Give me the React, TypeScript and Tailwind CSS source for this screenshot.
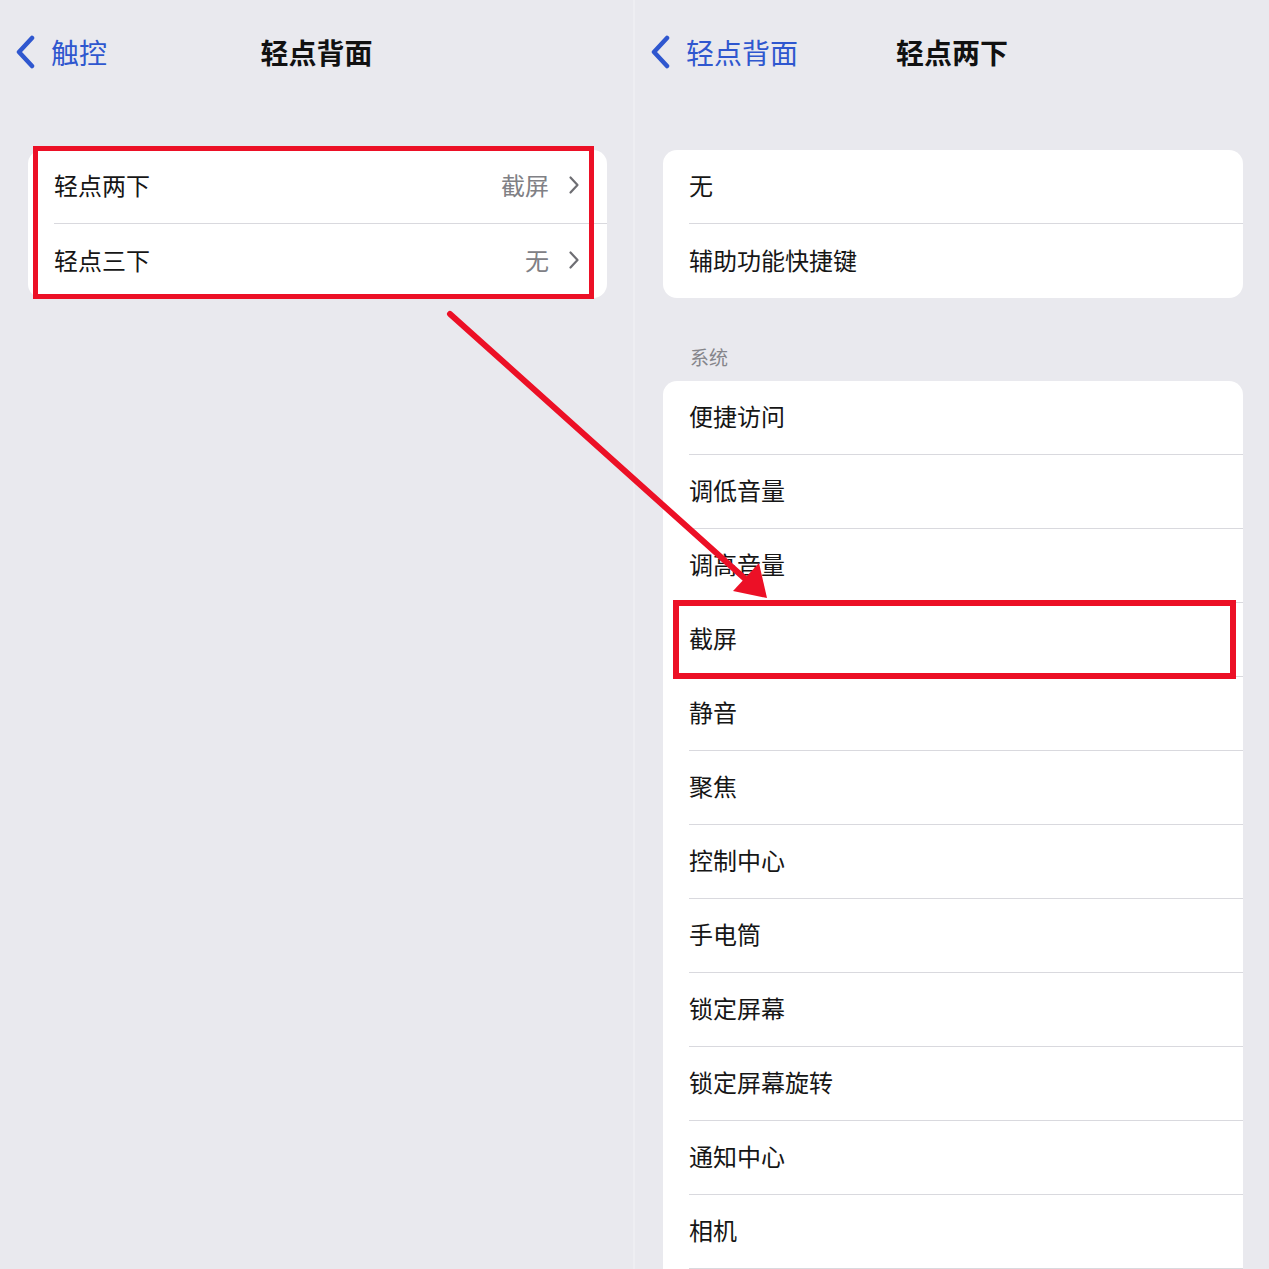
const font = { fontFamily: '"Noto Sans CJK SC", "Noto Sans", sans-serif' };

function BackChevron() {
  return (
    <svg width="22" height="34" viewBox="0 0 22 34" className="shrink-0">
      <path d="M17 3 L4 17 L17 31" fill="none" stroke="#2f57cf" strokeWidth="4.5" strokeLinecap="round" strokeLinejoin="round" />
    </svg>
  );
}

function RowChevron() {
  return (
    <svg width="12" height="20" viewBox="0 0 12 20" className="shrink-0">
      <path d="M2.5 2.5 L9.5 10 L2.5 17.5" fill="none" stroke="#6e6e73" strokeWidth="2.2" strokeLinecap="round" strokeLinejoin="round" />
    </svg>
  );
}

function NavBar({ back, title }: { back: string; title: string }) {
  return (
    <div className="relative h-[107px] flex items-center">
      <div className="flex items-center gap-[14px] pl-[15px] pb-[3px]">
        <BackChevron />
        <span className="text-[28px] text-[#2f57cf] leading-none">{back}</span>
      </div>
      <div className="absolute inset-x-0 top-0 h-[107px] flex items-center justify-center pb-[3px] pointer-events-none">
        <span className="text-[28px] font-bold text-[#111] leading-none">{title}</span>
      </div>
    </div>
  );
}

function Row({ label, value, last }: { label: string; value?: string; last?: boolean }) {
  return (
    <div className="h-[74px] pl-[26px] flex">
      <div className={`flex-1 flex items-center pr-[27px] pb-[3px] ${last ? "" : "border-b border-[#d9d9de]"}`}>
        <span className="flex-1 text-[24px] text-[#161616] leading-none">{label}</span>
        {value !== undefined && (
          <div className="flex items-center gap-[19px]">
            <span className="text-[24px] text-[#808085] leading-none">{value}</span>
            <RowChevron />
          </div>
        )}
      </div>
    </div>
  );
}

const systemItems = [
  "便捷访问",
  "调低音量",
  "调高音量",
  "截屏",
  "静音",
  "聚焦",
  "控制中心",
  "手电筒",
  "锁定屏幕",
  "锁定屏幕旋转",
  "通知中心",
  "相机",
];

export default function App() {
  return (
    <div className="relative w-[1269px] h-[1269px] overflow-hidden bg-[#e9e9ee] flex" style={font}>
      {/* left pane */}
      <div className="w-[633px] shrink-0">
        <NavBar back="触控" title="轻点背面" />
        <div className="mt-[43px] ml-[28px] mr-[26px] bg-white rounded-[14px] overflow-hidden">
          <Row label="轻点两下" value="截屏" />
          <Row label="轻点三下" value="无" last />
        </div>
      </div>

      <div className="w-[2px] shrink-0 bg-[#eeeef2]" />

      {/* right pane */}
      <div className="flex-1">
        <NavBar back="轻点背面" title="轻点两下" />
        <div className="mt-[43px] ml-[28px] mr-[26px] bg-white rounded-[14px] overflow-hidden">
          <Row label="无" />
          <Row label="辅助功能快捷键" last />
        </div>
        <div className="h-[83px] pl-[55px] flex items-end pb-[15px]">
          <span className="text-[19px] text-[#85858a] leading-none">系统</span>
        </div>
        <div className="ml-[28px] mr-[26px] bg-white rounded-t-[14px] overflow-hidden">
          {systemItems.map((item) => (
            <Row key={item} label={item} />
          ))}
        </div>
      </div>

      {/* annotations */}
      <div className="absolute left-[33px] top-[146px] w-[561px] h-[153px] border-[5px] border-[#ec1026] pointer-events-none" />
      <div className="absolute left-[673px] top-[600px] w-[563px] h-[79px] border-[6px] border-[#ec1026] pointer-events-none" />
      <svg className="absolute left-0 top-0 pointer-events-none" width="1269" height="1269">
        <line x1="450" y1="314" x2="752" y2="585" stroke="#ec1026" strokeWidth="6" strokeLinecap="round" />
        <polygon points="767,598 733,591 759,563" fill="#ec1026" />
      </svg>
    </div>
  );
}
